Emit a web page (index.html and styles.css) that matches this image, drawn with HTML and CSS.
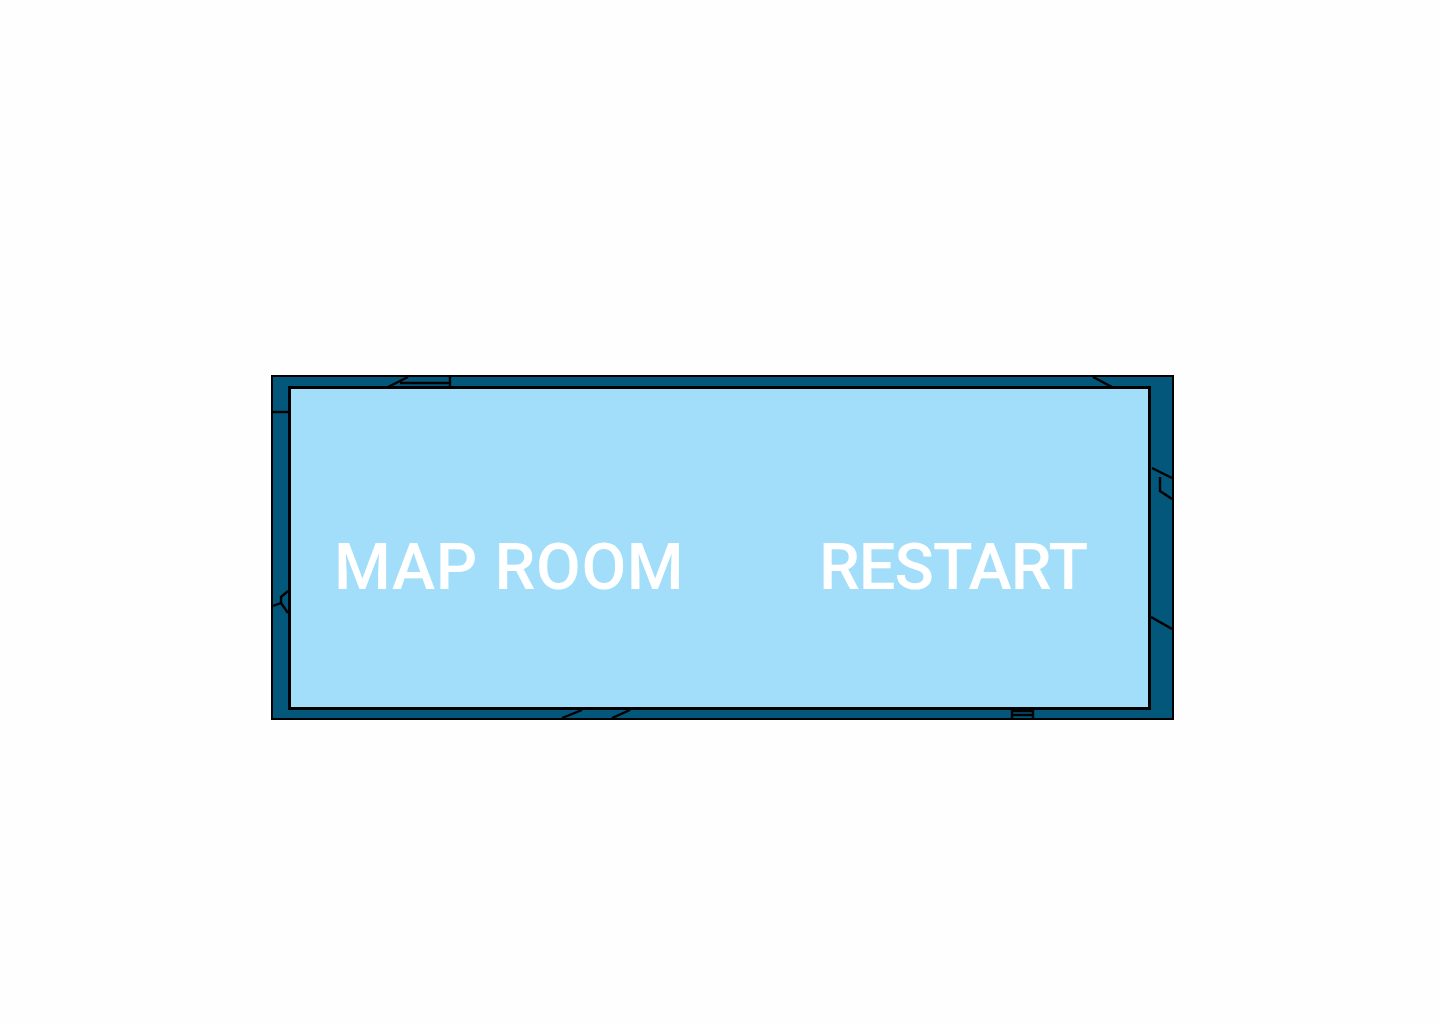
FILE: index.html
```html
<!DOCTYPE html>
<html>
<head>
<meta charset="utf-8">
<link rel="stylesheet" href="styles.css">
</head>
<body>
<div class="stage">
  <div class="frame">
    <svg class="deco" viewBox="0 0 899 341" width="899" height="341" fill="none" stroke="#000" stroke-width="2.4">
      <path d="M115 10 L135 0 M127 6 H177 M177 0 V10"/>
      <path d="M0 35 H15"/>
      <path d="M820 0 L839 10"/>
      <path d="M879 91 L899 101 M887 100 V114 L899 122"/>
      <path d="M15 214 L8 220 V226 L0 229 M8 226 L15 236"/>
      <path d="M878 240 L899 252"/>
      <path d="M289 341 L309 333 M339 341 L357 333"/>
      <path d="M739 341 V334 H760 V341 M739 338 H760"/>
    </svg>
    <div class="panel">
      <span class="btn btn-map">MAP ROOM</span>
      <span class="btn btn-restart">RESTART</span>
    </div>
  </div>
</div>
</body>
</html>
```
FILE: styles.css
```css
html, body {
  margin: 0;
  padding: 0;
  background: #fefefe;
}
.stage {
  width: 1440px;
  height: 1024px;
  padding: 375px 0 0 271px;
  box-sizing: border-box;
}
.frame {
  position: relative;
  width: 903px;
  height: 345px;
  box-sizing: border-box;
  border: 2px solid #000;
  background: #03577a;
  padding: 9px 21px 8px 15px;
}
.deco {
  position: absolute;
  left: 0;
  top: 0;
}
.panel {
  position: relative;
  height: 100%;
  box-sizing: border-box;
  border: 3px solid #000;
  background: #a2defa;
  display: flex;
  align-items: center;
  justify-content: space-between;
  padding: 38px 61px 0 43px;
}
.btn {
  font-family: Roboto, "Liberation Sans", sans-serif;
  font-size: 65px;
  font-weight: 500;
  color: #fff;
  line-height: 1;
}
.btn-map {
  letter-spacing: 0.6px;
}
.btn-restart {
  letter-spacing: -1px;
}
```
